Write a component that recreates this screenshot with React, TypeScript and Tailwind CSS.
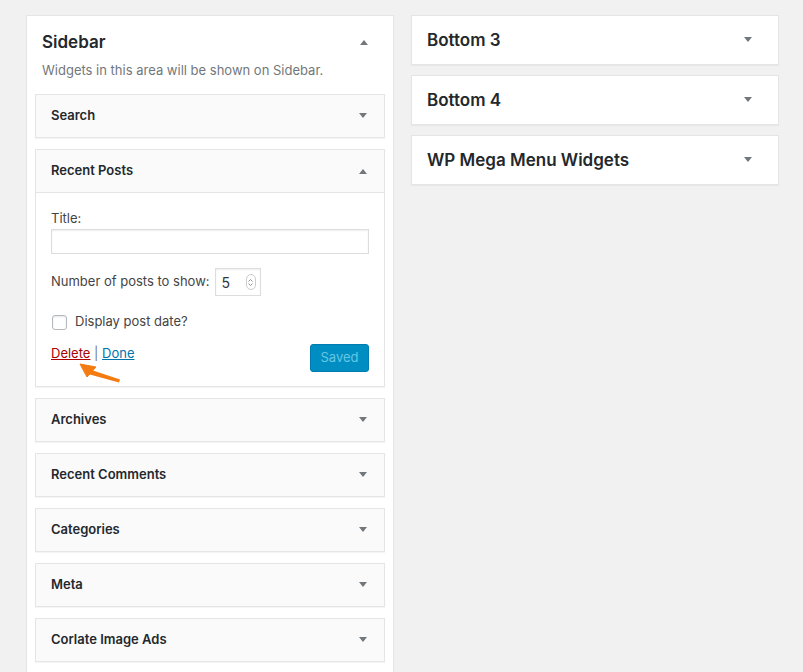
import React from "react";

const font = { fontFamily: 'Inter, "Noto Sans", sans-serif' };

function Arrow({ up = false }: { up?: boolean }) {
  return (
    <svg width="10" height="6" viewBox="0 0 10 6" className="text-[#72777c]">
      {up ? <path d="M1 6 L5 1 L9 6 Z" fill="currentColor" /> : <path d="M1 0 L9 0 L5 5 Z" fill="currentColor" />}
    </svg>
  );
}

function Widget({ title }: { title: string }) {
  return (
    <div className="border border-[#e5e5e5] bg-[#fafafa] h-[44px] flex items-center justify-between pl-[15px] pr-[16px] shadow-[0_1px_1px_rgba(0,0,0,0.04)]">
      <span className="text-[13px] font-semibold text-[#23282d]">{title}</span>
      <Arrow />
    </div>
  );
}

function RightPanel({ title }: { title: string }) {
  return (
    <div className="bg-white border border-[#e5e5e5] h-[50px] flex items-center justify-between pl-[15px] pr-[25px] pt-[2px] shadow-[0_1px_1px_rgba(0,0,0,0.04)]">
      <span className="text-[17px] font-semibold text-[#23282d]">{title}</span>
      <div className="mt-[-2px]"><Arrow /></div>
    </div>
  );
}

export default function App() {
  return (
    <div className="min-h-[672px] h-[672px] overflow-hidden bg-[#f1f1f1] text-[#444]" style={font}>
      <div className="flex gap-[17px] pl-[26px] pt-[15px]">
        <div className="w-[368px] bg-white border border-[#e5e5e5] shadow-[0_1px_1px_rgba(0,0,0,0.04)] h-[700px] shrink-0">
          <div className="px-[15px] pt-[15px] flex items-start justify-between">
            <div>
              <div className="text-[17px] font-semibold text-[#23282d] leading-[22px]">Sidebar</div>
              <div className="text-[13px] text-[#72777c] mt-[8px] leading-[18px]">Widgets in this area will be shown on Sidebar.</div>
            </div>
            <div className="mt-[8px] mr-[9px]"><Arrow up /></div>
          </div>
          <div className="px-[8px] mt-[15px] flex flex-col gap-[11px]">
            <Widget title="Search" />
            <div className="border border-[#e5e5e5] bg-white shadow-[0_1px_1px_rgba(0,0,0,0.04)]">
              <div className="bg-[#fafafa] border-b border-[#e5e5e5] h-[43px] flex items-center justify-between pl-[15px] pr-[16px]">
                <span className="text-[13px] font-semibold text-[#23282d]">Recent Posts</span>
                <Arrow up />
              </div>
              <div className="px-[15px] pt-[16px] pb-[14px] text-[13px] text-[#444] relative">
                <div className="leading-[18px]">Title:</div>
                <div className="mt-[2px] h-[25px] border border-[#ddd] shadow-[inset_0_1px_2px_rgba(0,0,0,0.07)] bg-white" />
                <div className="mt-[14px] flex items-center gap-[5px]">
                  <span>Number of posts to show:</span>
                  <div className="w-[46px] h-[28px] border border-[#ddd] bg-white flex items-center justify-between pl-[6px] pr-[4px] shadow-[inset_0_1px_2px_rgba(0,0,0,0.07)]">
                    <span className="text-[14px] text-[#32373c]">5</span>
                    <div className="w-[10px] h-[16px] border border-[#ccc] rounded-full flex flex-col items-center justify-center gap-[1px]">
                      <svg width="5" height="3" viewBox="0 0 5 3"><path d="M0.5 2.5 L2.5 0.5 L4.5 2.5" stroke="#777" strokeWidth="0.8" fill="none" /></svg>
                      <svg width="5" height="3" viewBox="0 0 5 3"><path d="M0.5 0.5 L2.5 2.5 L4.5 0.5" stroke="#777" strokeWidth="0.8" fill="none" /></svg>
                    </div>
                  </div>
                </div>
                <div className="mt-[17px] flex items-center h-[18px]">
                  <div className="ml-[1px] w-[15px] h-[15px] border border-[#b4b9be] rounded-[3px] bg-white shadow-[inset_0_1px_2px_rgba(0,0,0,0.1)]" />
                  <span className="ml-[8px]">Display post date?</span>
                </div>
                <div className="mt-[13px] flex items-start justify-between">
                  <div className="leading-[18px]">
                    <span className="text-[#a00] underline">Delete</span>
                    <span className="text-[#72777c]"> | </span>
                    <span className="text-[#0073aa] underline">Done</span>
                  </div>
                  <div className="w-[59px] h-[28px] rounded-[3px] bg-[#008ec2] border border-[#007cb2] text-[#66c6e4] flex items-center justify-center text-[13px]">Saved</div>
                </div>
                <svg className="absolute left-[40px] top-[167px]" width="50" height="26" viewBox="0 0 50 26">
                  <path d="M14 9.5 L44 19.5 L43 22.5 L12 14 Z" fill="#f47b0f" />
                  <path d="M4 4 L20 7 L11 17 Z" fill="#f47b0f" stroke="#f47b0f" strokeWidth="1" strokeLinejoin="round" />
                </svg>
              </div>
            </div>
            <Widget title="Archives" />
            <Widget title="Recent Comments" />
            <Widget title="Categories" />
            <Widget title="Meta" />
            <Widget title="Corlate Image Ads" />
          </div>
        </div>
        <div className="w-[368px] flex flex-col gap-[10px] shrink-0">
          <RightPanel title="Bottom 3" />
          <RightPanel title="Bottom 4" />
          <RightPanel title="WP Mega Menu Widgets" />
        </div>
      </div>
    </div>
  );
}
